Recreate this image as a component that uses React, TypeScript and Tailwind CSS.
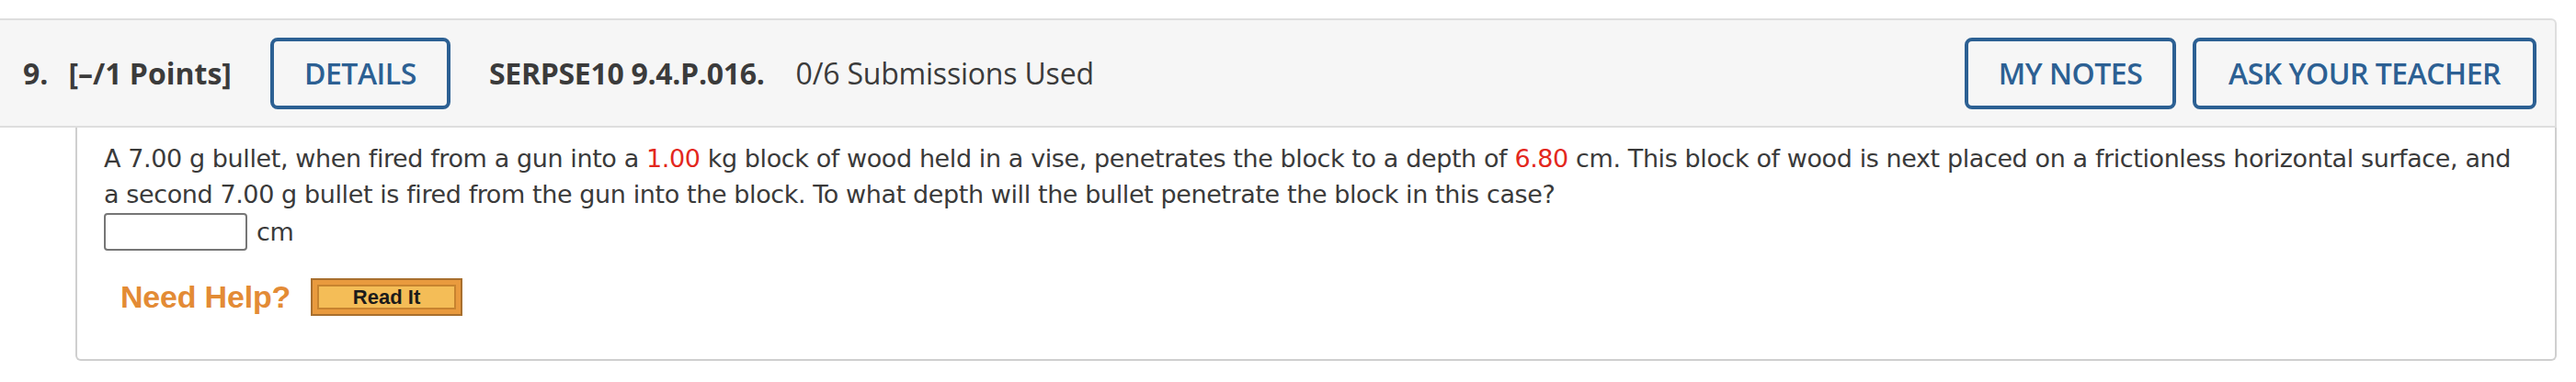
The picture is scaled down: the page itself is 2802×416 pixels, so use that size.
import React from "react";

const openSans = { fontFamily: '"Open Sans", "Noto Sans", Arial, sans-serif' };

function OutlineButton({ children, className = "" }: { children: React.ReactNode; className?: string }) {
  return (
    <button
      className={`h-[78px] rounded-[8px] border-[4px] border-[#2c6093] bg-transparent text-[32px] font-semibold text-[#2c6093] tracking-[-0.5px] ${className}`}
      style={openSans}
    >
      {children}
    </button>
  );
}

export default function App() {
  return (
    <div className="w-[2802px] h-[416px] bg-white pt-[20px]">
      <div className="w-[2781px]">
        {/* Header */}
        <div
          className="h-[119px] flex items-center border-y-2 border-r-2 border-[#dedede] rounded-tr-[6px] bg-[#f6f6f6] pl-[25px] pr-[20px] text-[#3b3b3b]"
          style={openSans}
        >
          <span className="text-[32px] font-bold">9.</span>
          <span className="ml-[22px] text-[32px] font-bold">[–/1 Points]</span>
          <OutlineButton className="ml-[42px] w-[196px]">DETAILS</OutlineButton>
          <span className="ml-[42px] text-[32px] font-bold tracking-[-0.3px]">SERPSE10 9.4.P.016.</span>
          <span className="ml-[34px] text-[32px] tracking-[-0.2px]">0/6 Submissions Used</span>
          <div className="ml-auto flex gap-[18px]">
            <OutlineButton className="w-[230px]">MY NOTES</OutlineButton>
            <OutlineButton className="w-[374px]">ASK YOUR TEACHER</OutlineButton>
          </div>
        </div>

        {/* Body */}
        <div className="ml-[82px] h-[254px] border-x-2 border-b-2 border-[#cfcfcf] rounded-b-[6px] pl-[29px] pt-[14px]">
          <div
            className="text-[27px] leading-[39px] tracking-[-0.4px] text-[#3a3a3a] whitespace-nowrap"
            style={{ fontFamily: '"DejaVu Sans", Verdana, sans-serif' }}
          >
            A 7.00 g bullet, when fired from a gun into a <span className="text-[#e3271d]">1.00</span> kg block of wood held in a vise, penetrates the block to a depth of <span className="text-[#e3271d]">6.80</span> cm. This block of wood is next placed on a frictionless horizontal surface, and
            <br />
            a second 7.00 g bullet is fired from the gun into the block. To what depth will the bullet penetrate the block in this case?
          </div>
          <div
            className="flex items-center mt-[1px]"
            style={{ fontFamily: '"DejaVu Sans", Verdana, sans-serif' }}
          >
            <input
              type="text"
              className="w-[156px] h-[41px] rounded-[4px] border-2 border-[#767676] bg-white"
            />
            <span className="ml-[10px] text-[27px] tracking-[-0.4px] text-[#3a3a3a] leading-[39px]">cm</span>
          </div>
          <div className="flex items-center mt-[25px] ml-[18px]">
            <span
              className="text-[34px] font-bold text-[#e38b35] tracking-[-0.2px]"
              style={{ fontFamily: '"Liberation Sans", Arial, sans-serif' }}
            >
              Need Help?
            </span>
            <div className="ml-[22px] w-[165px] h-[41px] border-2 border-[#a86f2e] bg-[#e99a3e] p-[5px]">
              <div
                className="w-full h-full border-2 border-[#c7832f] bg-[#f4bd57] flex items-center justify-center text-[22px] font-bold text-[#1b1b1b] leading-none"
                style={{ fontFamily: '"Liberation Sans", Arial, sans-serif' }}
              >
                Read It
              </div>
            </div>
          </div>
        </div>
      </div>
    </div>
  );
}
